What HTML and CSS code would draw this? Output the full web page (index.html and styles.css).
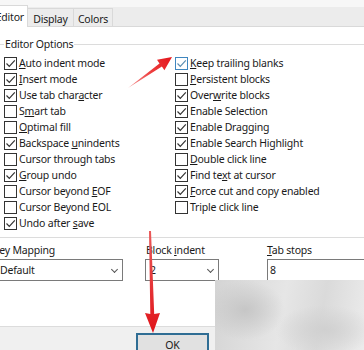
FILE: index.html
```html
<!DOCTYPE html>
<html lang="en">
<head>
  <meta charset="UTF-8">
  <title>Editor Options</title>
  <link rel="stylesheet" href="styles.css">
</head>
<body>
  <div class="window">
    <!-- Tab strip -->
    <div class="tabs">
      <div class="tab active">Editor</div>
      <div class="tab display">Display</div>
      <div class="tab colors">Colors</div>
    </div>

    <div class="page">
      <fieldset class="group">
        <legend>Editor Options</legend>
        <div class="cols">
          <div class="col">
            <label class="check"><span class="box on"></span><span><u>A</u>uto indent mode</span></label>
            <label class="check"><span class="box on"></span><span><u>I</u>nsert mode</span></label>
            <label class="check"><span class="box on"></span><span>Use tab char<u>a</u>cter</span></label>
            <label class="check"><span class="box"></span><span>S<u>m</u>art tab</span></label>
            <label class="check"><span class="box"></span><span><u>O</u>ptimal fill</span></label>
            <label class="check"><span class="box on"></span><span>Backspace <u>u</u>nindents</span></label>
            <label class="check"><span class="box"></span><span>Cursor through tabs</span></label>
            <label class="check"><span class="box on"></span><span><u>G</u>roup undo</span></label>
            <label class="check"><span class="box"></span><span>Cursor beyond <u>E</u>OF</span></label>
            <label class="check"><span class="box"></span><span>Cursor Beyond EOL</span></label>
            <label class="check"><span class="box on"></span><span>Undo after <u>s</u>ave</span></label>
          </div>
          <div class="col">
            <label class="check"><span class="box on focus"></span><span><u>K</u>eep trailing blanks</span></label>
            <label class="check"><span class="box"></span><span><u>P</u>ersistent blocks</span></label>
            <label class="check"><span class="box on"></span><span>Over<u>w</u>rite blocks</span></label>
            <label class="check"><span class="box on"></span><span>Enable Selection</span></label>
            <label class="check"><span class="box on"></span><span>Enable Dragging</span></label>
            <label class="check"><span class="box on"></span><span>Enable Search Highlight</span></label>
            <label class="check"><span class="box"></span><span><u>D</u>ouble click line</span></label>
            <label class="check"><span class="box on"></span><span>Find te<u>x</u>t at cursor</span></label>
            <label class="check"><span class="box on"></span><span><u>F</u>orce cut and copy enabled</span></label>
            <label class="check"><span class="box"></span><span>Triple click line</span></label>
          </div>
        </div>
      </fieldset>

      <!-- Combo boxes -->
      <div class="fields">
        <div class="field key-map">
          <div class="field-label">Key Mapping</div>
          <div class="combo">Default<span class="chev"></span></div>
        </div>
        <div class="field block-indent">
          <div class="field-label">Block <u>i</u>ndent</div>
          <div class="combo">2<span class="chev"></span></div>
        </div>
        <div class="field tab-stops">
          <div class="field-label"><u>T</u>ab stops</div>
          <div class="combo">8<span class="chev"></span></div>
        </div>
      </div>
    </div>

    <div class="footer">
      <button class="ok">OK</button>
    </div>

    <!-- blurred patch over the lower right corner -->
    <div class="smudge"></div>

    <!-- red pointer arrows -->
    <svg class="arrows" width="364" height="350" viewBox="0 0 364 350">
      <defs>
        <linearGradient id="diag" x1="128" y1="88" x2="172" y2="57" gradientUnits="userSpaceOnUse">
          <stop offset="0" stop-color="#f59a9a"/>
          <stop offset="0.5" stop-color="#ee4040"/>
          <stop offset="1" stop-color="#e3161c"/>
        </linearGradient>
        <linearGradient id="vert" x1="0" y1="231" x2="0" y2="333" gradientUnits="userSpaceOnUse">
          <stop offset="0" stop-color="#ea5a5a"/>
          <stop offset="1" stop-color="#e0141a"/>
        </linearGradient>
      </defs>
      <polygon fill="url(#diag)" points="128,88 159.5,63.4 157,59.7 172,57 164.4,70.3 161.9,66.6"/>
      <polygon fill="url(#vert)" points="149,231 150.3,314 145,313 153,333 160,313 154.2,314 151,231"/>
    </svg>
  </div>
</body>
</html>
```

FILE: styles.css
```css
body {
  margin: 0;
  overflow: hidden;
  background: #f0f0f0;
}

.window {
  position: relative;
  width: 364px;
  height: 350px;
  overflow: hidden;
  font-family: "Segoe UI", "Noto Sans", sans-serif;
  font-size: 10.5px;
  letter-spacing: -0.2px;
  color: #1a1a1a;
  background: #f7f7f7;
}

u {
  text-decoration: underline;
  text-underline-offset: 1px;
}

/* Tab strip */
.tabs {
  display: flex;
  align-items: flex-end;
  height: 19px;
  margin-top: 7px;
  background: #ececec;
  border-bottom: 1px solid #d9d9d9;
}

.tab {
  box-sizing: border-box;
  flex: none;
  height: 18px;
  line-height: 20px;
  text-align: center;
  background: #ececec;
  border: 1px solid #d9d9d9;
  border-bottom: none;
  margin-left: -1px;
}

.tab.active {
  width: 36px;
  height: 22px;
  line-height: 22px;
  text-align: right;
  padding-right: 3px;
  background: #fff;
  position: relative;
  top: 1px;
  margin-left: -8px;
}

.tab.display {
  width: 47px;
}

.tab.colors {
  width: 40px;
}

/* Page */
.page {
  background: #fff;
  height: 288px;
  margin-left: -8px;
  padding: 11px 0 0 4px;
  border-bottom: 1px solid #dcdcdc;
}

.group {
  box-sizing: border-box;
  margin: 0;
  width: 380px;
  height: 200px;
  padding: 4px 0 0 7px;
  border: 1px solid #dcdcdc;
}

.group legend {
  padding: 0 1px;
  margin-left: 0;
  line-height: 13px;
}

.cols {
  display: flex;
}

.col {
  display: flex;
  flex-direction: column;
  width: 171px;
}

.check {
  display: flex;
  align-items: center;
  height: 16px;
  white-space: nowrap;
}

.box {
  width: 11px;
  height: 11px;
  border: 1px solid #333;
  background: #fff;
  margin-right: 2px;
  flex: none;
}

.box.on {
  background: #fff url("data:image/svg+xml,%3Csvg xmlns='http://www.w3.org/2000/svg' width='11' height='11'%3E%3Cpath d='M1.5 5.5 L4.3 8.3 L9.8 2.3' fill='none' stroke='%23333' stroke-width='1.2'/%3E%3C/svg%3E") no-repeat;
}

.box.focus {
  border-color: #3f86bf;
  background: #fff url("data:image/svg+xml,%3Csvg xmlns='http://www.w3.org/2000/svg' width='11' height='11'%3E%3Cpath d='M1.5 5.5 L4.3 8.3 L9.8 2.3' fill='none' stroke='%235d8fb2' stroke-width='1.2'/%3E%3C/svg%3E") no-repeat;
}

/* Combos */
.fields {
  display: flex;
  margin-top: 6px;
  margin-left: -3px;
}

.field {
  flex: none;
}

.field-label {
  line-height: 12px;
  height: 12px;
  margin-bottom: 3px;
}

.combo {
  position: relative;
  height: 20px;
  line-height: 20px;
  border: 1px solid #7a7a7a;
  background: #fff;
}

.chev {
  position: absolute;
  right: 5px;
  top: 7px;
  width: 4px;
  height: 4px;
  border-right: 1px solid #555;
  border-bottom: 1px solid #555;
  transform: rotate(45deg);
}

.key-map {
  width: 130px;
}

.key-map .combo {
  padding-left: 6px;
}

.block-indent {
  width: 74px;
  margin-left: 22px;
}

.block-indent .combo {
  padding-left: 4px;
}

.block-indent .field-label {
  padding-left: 1px;
}

.tab-stops {
  width: 120px;
  margin-left: 48px;
}

.tab-stops .combo {
  padding-left: 2px;
}

/* Footer */
.footer {
  padding: 6px 0 0 136px;
  background: #f0f0f0;
}

.ok {
  width: 73px;
  height: 24px;
  font: inherit;
  color: #1a1a1a;
  background: #e1e1e1;
  border: 2px solid #2f6d94;
  padding: 0;
}

.smudge {
  position: absolute;
  left: 215px;
  top: 280px;
  width: 149px;
  height: 70px;
  background:
    radial-gradient(ellipse 40px 30px at 30px 30px, #c6c6c6, transparent),
    radial-gradient(ellipse 50px 25px at 110px 50px, #d0d0d0, transparent),
    linear-gradient(100deg, #d4d4d4, #e6e6e6 45%, #dadada 70%, #ececec);
}

.arrows {
  position: absolute;
  left: 0;
  top: 0;
}
```
